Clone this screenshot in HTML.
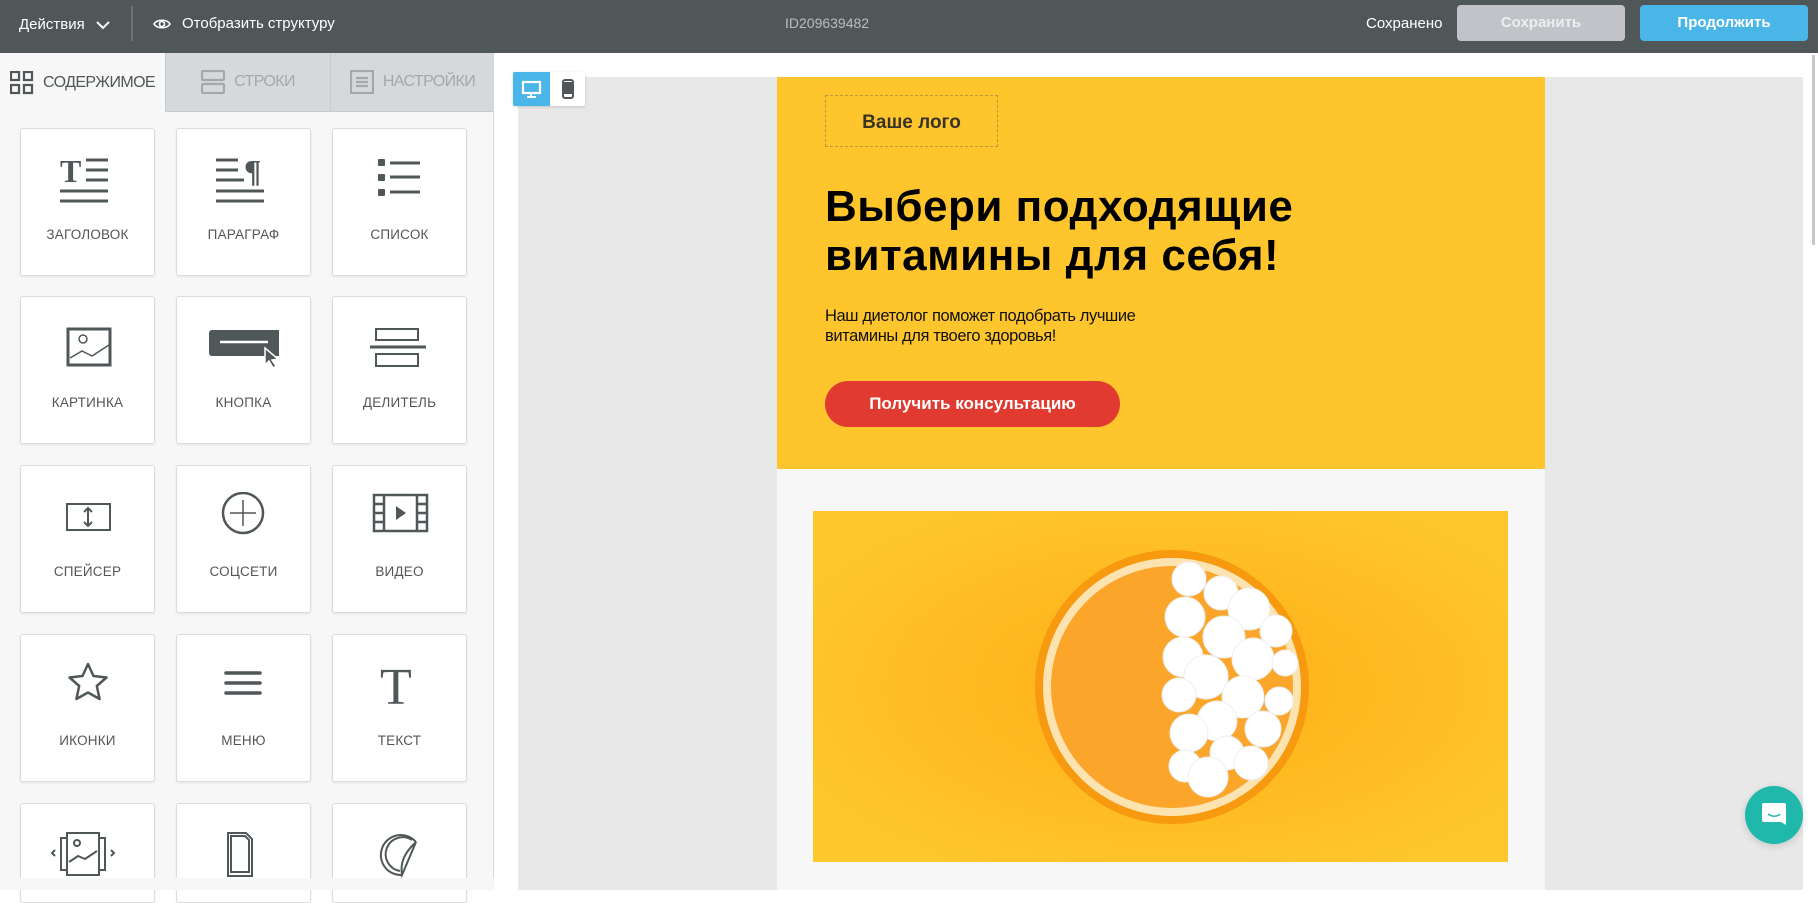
<!DOCTYPE html>
<html><head><meta charset="utf-8"><style>
*{box-sizing:border-box;margin:0;padding:0}
body{width:1818px;height:890px;overflow:hidden;background:#fff;font-family:"Liberation Sans","DejaVu Sans",sans-serif;position:relative}
.abs{position:absolute}
#hdr{left:0;top:0;width:1818px;height:53px;background:#505759;color:#fff;font-size:15px}
.tile{position:absolute;width:135px;height:148px;background:#fff;border:1px solid #dcdcdc;border-radius:3px;box-shadow:0 1px 2px rgba(0,0,0,.08)}
.tile svg{position:absolute;left:37px;top:26px}
.tile span{position:absolute;left:0;right:0;top:98px;text-align:center;font-size:13.5px;color:#555;letter-spacing:.2px}
.tab{position:absolute;top:53px;height:59px;font-size:16px;letter-spacing:-.6px;display:flex;align-items:center;justify-content:center;gap:9px}
</style></head><body>
<div id="hdr" class="abs">
 <div class="abs" style="left:19px;top:16px">Действия</div>
 <svg class="abs" style="left:95px;top:17px" width="16" height="16"><path d="M2 5l6 6 6-6" stroke="#fff" stroke-width="2" fill="none"/></svg>
 <div class="abs" style="left:131px;top:6px;width:2px;height:35px;background:#6b7274"></div>
 <svg class="abs" style="left:153px;top:15px" width="18" height="18"><path d="M1 9c3-5 13-5 16 0c-3 5-13 5-16 0z" stroke="#fff" stroke-width="1.6" fill="none"/><circle cx="9" cy="9" r="2.5" stroke="#fff" stroke-width="1.6" fill="none"/></svg>
 <div class="abs" style="left:182px;top:15px">Отобразить структуру</div>
 <div class="abs" style="left:785px;top:15px;color:#b9bdbf;font-size:14px">ID209639482</div>
 <div class="abs" style="left:1366px;top:15px">Сохранено</div>
 <div class="abs" style="left:1457px;top:5px;width:168px;height:36px;background:#c2c3c8;border-radius:4px;text-align:center;line-height:36px;font-weight:bold;color:#eceef0">Сохранить</div>
 <div class="abs" style="left:1640px;top:5px;width:168px;height:36px;background:#4ab6e8;border-radius:4px;text-align:center;line-height:36px;font-weight:bold">Продолжить</div>
</div>
<div class="abs" style="left:0;top:53px;width:494px;height:837px;background:#f7f7f7;border-right:1px solid #d8d8d8"></div>
<div class="tab" style="left:0;width:165px;color:#505759;background:#f7f7f7">
 <svg width="24" height="24"><g fill="none" stroke="#505759" stroke-width="2.2"><rect x="1" y="1" width="8" height="8"/><rect x="14" y="1" width="8" height="8"/><rect x="1" y="14" width="8" height="8"/><rect x="14" y="14" width="8" height="8"/></g></svg>СОДЕРЖИМОЕ</div>
<div class="tab" style="left:165px;width:165px;color:#a4a8ab;background:#d6d9db;border-left:1px solid #c8cbcd;border-bottom:1px solid #c8cbcd">
 <svg width="24" height="24"><g fill="none" stroke="#a4a8ab" stroke-width="2.2"><rect x="1" y="1" width="22" height="9" rx="1"/><rect x="1" y="14" width="22" height="9" rx="1"/></g></svg>СТРОКИ</div>
<div class="tab" style="left:330px;width:164px;color:#a4a8ab;background:#d6d9db;border-left:1px solid #c8cbcd;border-bottom:1px solid #c8cbcd">
 <svg width="24" height="24"><g fill="none" stroke="#a4a8ab" stroke-width="2.2"><rect x="1" y="1" width="22" height="22"/><path d="M6 8h12M6 12h12M6 16h12"/></g></svg>НАСТРОЙКИ</div>

<div class="tile" style="left:20px;top:128px"><svg width="60" height="50"><text x="2" y="27" font-family="Liberation Serif" font-weight="bold" font-size="32" fill="#505759">T</text><g stroke="#505759" stroke-width="3"><path d="M28 5h22M28 15h22M28 25h22M2 36h48M2 46h48"/></g></svg><span>ЗАГОЛОВОК</span></div>
<div class="tile" style="left:176px;top:128px"><svg width="60" height="50"><text x="30" y="27" font-family="Liberation Serif" font-weight="bold" font-size="32" fill="#505759">¶</text><g stroke="#505759" stroke-width="3"><path d="M2 5h22M2 15h22M2 25h28M2 36h48M2 46h48"/></g></svg><span>ПАРАГРАФ</span></div>
<div class="tile" style="left:332px;top:128px"><svg width="60" height="50"><g fill="#505759"><rect x="8" y="4" width="7" height="7" rx="1"/><rect x="8" y="19" width="7" height="7" rx="1"/><rect x="8" y="34" width="7" height="7" rx="1"/></g><g stroke="#505759" stroke-width="3"><path d="M20 8h30M20 22h30M20 37h30"/></g></svg><span>СПИСОК</span></div>

<div class="tile" style="left:20px;top:296px"><svg width="60" height="50"><rect x="10" y="6" width="42" height="36" fill="none" stroke="#505759" stroke-width="3"/><circle cx="25" cy="16" r="4" fill="none" stroke="#505759" stroke-width="1.5"/><path d="M12 35l12-7 10 5 17-11" fill="none" stroke="#505759" stroke-width="1.5"/></svg><span>КАРТИНКА</span></div>
<div class="tile" style="left:176px;top:296px"><svg width="70" height="50" style="left:32px"><rect x="0" y="7" width="72" height="26" rx="3" fill="#505759"/><path d="M11 19h48" stroke="#fff" stroke-width="2.5"/><path d="M56 25l0 17 4-4 4 7 3-2-4-6 6-1z" fill="#505759" stroke="#fff" stroke-width="1.5"/></svg><span>КНОПКА</span></div>
<div class="tile" style="left:332px;top:296px"><svg width="60" height="50"><g fill="none" stroke="#505759"><rect x="6" y="6" width="42" height="11" stroke-width="2"/><rect x="6" y="31" width="42" height="12" stroke-width="2"/><path d="M0 24h56" stroke-width="3"/></g></svg><span>ДЕЛИТЕЛЬ</span></div>

<div class="tile" style="left:20px;top:465px"><svg width="60" height="50" style="top:34px"><rect x="9" y="4" width="43" height="26" fill="none" stroke="#505759" stroke-width="2"/><path d="M30 8v18M26 12l4-4 4 4M26 22l4 4 4-4" fill="none" stroke="#505759" stroke-width="2"/></svg><span>СПЕЙСЕР</span></div>
<div class="tile" style="left:176px;top:465px"><svg width="60" height="50"><circle cx="29" cy="21" r="20" fill="none" stroke="#505759" stroke-width="2.5"/><path d="M29 8v26M16 21h26" stroke="#505759" stroke-width="1.5"/></svg><span>СОЦСЕТИ</span></div>
<div class="tile" style="left:332px;top:465px"><svg width="60" height="50"><g fill="none" stroke="#505759" stroke-width="2.5"><rect x="4" y="3" width="53" height="36"/><path d="M14 3v36M47 3v36M4 12h10M4 21h10M4 30h10M47 12h10M47 21h10M47 30h10"/></g><path d="M26 14l10 7-10 7z" fill="#505759"/></svg><span>ВИДЕО</span></div>

<div class="tile" style="left:20px;top:634px"><svg width="60" height="50"><path d="M30 3l5.5 12 13 1.5-9.7 8.5 2.8 13-11.6-6.5-11.6 6.5 2.8-13-9.7-8.5 13-1.5z" fill="none" stroke="#505759" stroke-width="2.5" stroke-linejoin="round"/></svg><span>ИКОНКИ</span></div>
<div class="tile" style="left:176px;top:634px"><svg width="60" height="50"><g stroke="#505759" stroke-width="3.5" stroke-linecap="round"><path d="M12 12h34M12 22h34M12 32h34"/></g></svg><span>МЕНЮ</span></div>
<div class="tile" style="left:332px;top:634px"><svg width="60" height="50"><text x="10" y="43" font-family="Liberation Serif" font-size="52" fill="#505759">T</text></svg><span>ТЕКСТ</span></div>

<div class="tile" style="left:20px;top:803px;height:100px"><svg width="70" height="50" style="left:28px"><g fill="none" stroke="#505759" stroke-width="2"><rect x="12" y="8" width="44" height="32"/><rect x="18" y="3" width="32" height="42" fill="#fff"/><circle cx="28" cy="13" r="3"/><path d="M20 32l9-6 7 3 12-8"/><path d="M6 20l-3 3 3 3M62 20l3 3-3 3"/></g></svg></div>
<div class="tile" style="left:176px;top:803px;height:100px"><svg width="60" height="50"><g fill="none" stroke="#505759" stroke-width="2"><path d="M14 3h18l6 6v37h-24z"/><path d="M17 6h14l4 4v32h-18z"/></g></svg></div>
<div class="tile" style="left:332px;top:803px;height:100px"><svg width="60" height="50"><g fill="none" stroke="#505759" stroke-width="2"><path d="M46 12a20 20 0 1 0-14 33"/><path d="M46 12l-14 33c-2-12 2-22 14-33z"/><path d="M42 10a17 17 0 1 0-12 31"/></g></svg></div>
<div class="abs" style="left:0;top:878px;width:494px;height:12px;background:#f7f7f7"></div>

<div class="abs" style="left:518px;top:77px;width:1285px;height:813px;background:#e8e8e9"></div>
<div class="abs" style="left:1812px;top:55px;width:3px;height:190px;background:#c8c8c8"></div>
<div class="abs" style="left:513px;top:72px;width:72px;height:34px;background:#fff;box-shadow:0 1px 3px rgba(0,0,0,.15);border-radius:2px"></div>
<div class="abs" style="left:513px;top:72px;width:37px;height:34px;background:#4ab6e8;border-radius:2px 0 0 2px"></div>
<svg class="abs" style="left:521px;top:79px" width="22" height="20"><rect x="2" y="3" width="17" height="11" fill="none" stroke="#fff" stroke-width="2.2"/><path d="M10 14v3M6 18h9" stroke="#fff" stroke-width="2"/></svg>
<svg class="abs" style="left:560px;top:79px" width="16" height="20"><rect x="3" y="1" width="10" height="18" rx="2" fill="none" stroke="#505759" stroke-width="2"/><rect x="4" y="3" width="8" height="12" fill="#505759"/></svg>

<div class="abs" style="left:777px;top:77px;width:768px;height:813px;background:#f7f7f7"></div>
<div class="abs" style="left:777px;top:77px;width:768px;height:392px;background:#fec52c"></div>
<div class="abs" style="left:825px;top:95px;width:173px;height:52px;border:1px dashed #b89a3a;text-align:center;line-height:54px;font-weight:bold;font-size:19px;color:#3a3325">Ваше лого</div>
<div class="abs" style="left:825px;top:182px;font-weight:bold;font-size:44px;line-height:49px;color:#000;letter-spacing:.5px">Выбери подходящие<br>витамины для себя!</div>
<div class="abs" style="left:825px;top:306px;font-size:16.5px;line-height:20px;color:#111;letter-spacing:-.4px">Наш диетолог поможет подобрать лучшие<br>витамины для твоего здоровья!</div>
<div class="abs" style="left:825px;top:381px;width:295px;height:46px;border-radius:23px;background:#e03a31;color:#fff;font-weight:bold;font-size:17px;text-align:center;line-height:46px">Получить консультацию</div>

<svg class="abs" style="left:813px;top:511px" width="695" height="351">
 <defs><radialGradient id="g" cx="0.52" cy="0.5" r="0.6"><stop offset="0.3" stop-color="#ffb51c"/><stop offset="1" stop-color="#fec72c"/></radialGradient></defs>
 <rect width="695" height="351" fill="url(#g)"/>
 <circle cx="359" cy="176" r="137" fill="#f79a10"/>
 <circle cx="359" cy="176" r="129" fill="#fde3b0"/>
 <circle cx="359" cy="176" r="121" fill="#fba52a"/>
 <g fill="#fff" stroke="#eee" stroke-width="1">
  <circle cx="376" cy="68" r="17"/><circle cx="408" cy="82" r="17"/><circle cx="372" cy="106" r="20"/><circle cx="436" cy="98" r="21"/><circle cx="463" cy="120" r="16"/>
  <circle cx="411" cy="126" r="21"/><circle cx="370" cy="146" r="20"/><circle cx="440" cy="148" r="21"/><circle cx="472" cy="152" r="13"/>
  <circle cx="393" cy="166" r="22"/><circle cx="366" cy="184" r="17"/><circle cx="430" cy="186" r="21"/><circle cx="466" cy="190" r="14"/>
  <circle cx="404" cy="210" r="20"/><circle cx="450" cy="218" r="18"/><circle cx="376" cy="222" r="19"/><circle cx="414" cy="242" r="17"/>
  <circle cx="372" cy="255" r="16"/><circle cx="395" cy="266" r="20"/><circle cx="438" cy="252" r="17"/>
 </g>
</svg>

<div class="abs" style="left:1745px;top:786px;width:58px;height:58px;border-radius:50%;background:#1fb8ab;box-shadow:0 2px 8px rgba(0,0,0,.15)"></div>
<svg class="abs" style="left:1760px;top:801px" width="28" height="28"><path d="M4 2h20a2 2 0 0 1 2 2v20l-5-3H4a2 2 0 0 1-2-2V4a2 2 0 0 1 2-2z" fill="#fff"/><path d="M8 13c4 3 9 3 12 0" stroke="#1fb8ab" stroke-width="1.6" fill="none"/></svg>
</body></html>
